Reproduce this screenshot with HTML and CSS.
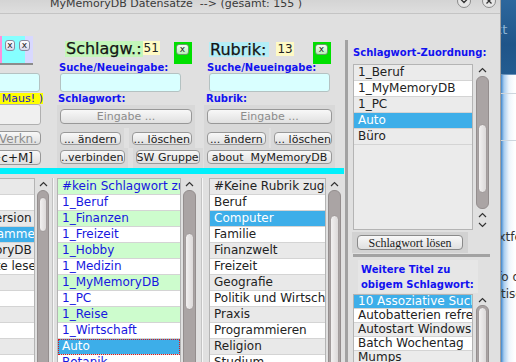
FILE: index.html
```html
<!DOCTYPE html>
<html>
<head>
<meta charset="utf-8">
<title>MyMemoryDB Datensätze</title>
<link rel="stylesheet" href="styles.css">
</head>
<body>
<div class="screen">
<div class="window">
	<div class="titlebar">
		<span class="title">MyMemoryDB Datensätze  --&gt; (gesamt: 155 )</span>
		<span class="tbtns">
			<span class="tbtn"><svg width="8" height="8" viewBox="0 0 8 8"><polyline points="1,2.5 4,5.5 7,2.5" fill="none" stroke="#333" stroke-width="1.3"/></svg></span>
			<span class="tbtn"><svg width="8" height="8" viewBox="0 0 8 8"><path d="M1.5 1.5 L6.5 6.5 M6.5 1.5 L1.5 6.5" stroke="#333" stroke-width="1.3"/></svg></span>
		</span>
	</div>
	<div class="client">
		<div class="main_pane">
			<div class="edit_area">
				<!-- previous column, scrolled off to the left -->
				<div class="col_prev">
					<div class="prev_inner">
						<div class="tag_strip"><button class="xbtn">x</button><button class="xbtn wide">x</button></div>
						<input class="edit prev_edit" type="text">
						<div class="hint">(rechte Maus! )</div>
						<input class="edit plain" type="text">
						<button class="btn clip b_verkn" disabled>Neue Verkn.</button>
						<button class="btn clip b_key">Merken [Alt+c+M]</button>
					</div>
				</div>
				<!-- Schlagwort -->
				<div class="col col_sw">
					<div class="col_head">
						<span class="head_label sw_label">Schlagw.:</span><span class="count">51</span>
						<span class="close_box"><button class="xbtn green">x</button></span>
					</div>
					<div class="blue_label">Suche/Neueingabe:</div>
					<input class="edit" type="text">
					<div class="blue_label sub">Schlagwort:</div>
					<div class="cell_row r1"><span class="cell"><button class="btn" disabled>Eingabe ...</button></span></div>
					<div class="cell_row r2"><span class="cell"><button class="btn">... ändern</button></span><span class="cell"><button class="btn">... löschen</button></span></div>
					<div class="cell_row r3"><span class="cell"><button class="btn">..verbinden</button></span><span class="cell"><button class="btn">SW Gruppe</button></span></div>
				</div>
				<!-- Rubrik -->
				<div class="col col_rub">
					<div class="col_head">
						<span class="head_label rub_label">Rubrik:</span><span class="count">13</span>
						<span class="close_box"><button class="xbtn green">x</button></span>
					</div>
					<div class="blue_label">Suche/Neueingabe:</div>
					<input class="edit" type="text">
					<div class="blue_label sub">Rubrik:</div>
					<div class="cell_row r1"><span class="cell"><button class="btn" disabled>Eingabe ...</button></span></div>
					<div class="cell_row r2"><span class="cell"><button class="btn">... ändern</button></span><span class="cell"><button class="btn">... löschen</button></span></div>
					<div class="cell_row r3"><span class="cell"><button class="btn">about&nbsp; MyMemoryDB</button></span></div>
				</div>
			</div>
			<div class="cyan_bar"></div>
			<div class="list_area">
				<div class="list list_prev">
					<div class="row">Info</div>
					<div class="row">Hilfe</div>
					<div class="row">Demo-Version</div>
					<div class="row sel">Wissensammeln</div>
					<div class="row">MyMemoryDB</div>
					<div class="row">Notizseite lesen</div>
					<div class="row">Notiz</div>
					<div class="row">Links</div>
					<div class="row">Suche</div>
					<div class="row">Tipps</div>
					<div class="row">Ideen</div>
					<div class="row">Fotos</div>
				</div>
				<div class="sbar s_prev">
					<div class="sarrow"><svg width="9" height="6" viewBox="0 0 9 6"><polyline points="1,5 4.5,1.5 8,5" fill="none" stroke="#333" stroke-width="1.2"/></svg></div>
					<div class="strack"><div class="sthumb"></div></div>
				</div>
				<div class="splitter"></div>
				<div class="list list_sw">
					<div class="row">#kein Schlagwort zugeordnet</div>
					<div class="row">1_Beruf</div>
					<div class="row">1_Finanzen</div>
					<div class="row">1_Freizeit</div>
					<div class="row">1_Hobby</div>
					<div class="row">1_Medizin</div>
					<div class="row">1_MyMemoryDB</div>
					<div class="row">1_PC</div>
					<div class="row">1_Reise</div>
					<div class="row">1_Wirtschaft</div>
					<div class="row sel focus">Auto</div>
					<div class="row">Botanik</div>
				</div>
				<div class="sbar s_sw">
					<div class="sarrow"><svg width="9" height="6" viewBox="0 0 9 6"><polyline points="1,5 4.5,1.5 8,5" fill="none" stroke="#333" stroke-width="1.2"/></svg></div>
					<div class="strack"><div class="sthumb"></div></div>
				</div>
				<div class="splitter wide"></div>
				<div class="list list_rub">
					<div class="row">#Keine Rubrik zugeordnet</div>
					<div class="row">Beruf</div>
					<div class="row sel">Computer</div>
					<div class="row">Familie</div>
					<div class="row">Finanzwelt</div>
					<div class="row">Freizeit</div>
					<div class="row">Geografie</div>
					<div class="row">Politik und Wirtschaft</div>
					<div class="row">Praxis</div>
					<div class="row">Programmieren</div>
					<div class="row">Religion</div>
					<div class="row">Studium</div>
				</div>
				<div class="sbar s_rub">
					<div class="sarrow"><svg width="9" height="6" viewBox="0 0 9 6"><polyline points="1,5 4.5,1.5 8,5" fill="none" stroke="#333" stroke-width="1.2"/></svg></div>
					<div class="strack"><div class="sthumb"></div></div>
				</div>
			</div>
		</div>
		<div class="split_bar"></div>
		<div class="side_pane">
			<div class="blue_label">Schlagwort-Zuordnung:</div>
			<div class="list_block top_block">
				<div class="list list_zu">
					<div class="row">1_Beruf</div>
					<div class="row">1_MyMemoryDB</div>
					<div class="row">1_PC</div>
					<div class="row sel">Auto</div>
					<div class="row">Büro</div>
				</div>
				<div class="sbar s_zu">
					<div class="sarrow"><svg width="9" height="6" viewBox="0 0 9 6"><polyline points="1,5 4.5,1.5 8,5" fill="none" stroke="#333" stroke-width="1.2"/></svg></div>
					<div class="strack"><div class="sthumb"></div></div>
					<div class="sarrows">
						<svg width="9" height="6" viewBox="0 0 9 6"><polyline points="1,5 4.5,1.5 8,5" fill="none" stroke="#333" stroke-width="1.2"/></svg>
						<svg width="9" height="6" viewBox="0 0 9 6"><polyline points="1,1 4.5,4.5 8,1" fill="none" stroke="#333" stroke-width="1.2"/></svg>
					</div>
				</div>
			</div>
			<div class="cell_row lose"><span class="cell"><button class="btn serif">Schlagwort lösen</button></span></div>
			<div class="hline"></div>
			<div class="titel_label blue_label">Weitere Titel zu<br>obigem Schlagwort:</div>
			<div class="list_block">
				<div class="list list_titel">
					<div class="row sel">10 Assoziative Suche</div>
					<div class="row">Autobatterien refresh</div>
					<div class="row">Autostart Windows</div>
					<div class="row">Batch Wochentag</div>
					<div class="row">Mumps</div>
				</div>
				<div class="sbar s_titel">
					<div class="sarrow"><svg width="9" height="6" viewBox="0 0 9 6"><polyline points="1,5 4.5,1.5 8,5" fill="none" stroke="#333" stroke-width="1.2"/></svg></div>
					<div class="strack"><div class="sthumb"></div></div>
				</div>
			</div>
		</div>
	</div>
</div>
<div class="desktop">
	<div class="dk_top"><span>Text</span></div>
	<div class="dk_win">
		<div class="dk_rule"></div>
		<div class="dk_rule second"></div>
		<div class="dk_text t1">Textfeld</div>
		<div class="dk_text t2">Info dient</div>
		<div class="dk_text t3">Optisch</div>
	</div>
</div>
</div>
</body>
</html>
```

FILE: styles.css
```css
body
{
	margin : 0;
	font-family : "DejaVu Sans", sans-serif;
	font-size : 12px;
	color : #222222;
	background-color : #e0e0e0;
}
.screen
{
	display : flex;
	width : 516px;
	height : 362px;
	overflow : hidden;
}
.window
{
	display : flex;
	flex-direction : column;
	width : 500px;
	flex : none;
	border-right : 1px solid #a0a0a0;
	background-color : #e0e0e0;
}

/* title bar, top edge is off screen */
.titlebar
{
	display : flex;
	height : 13px;
	border-bottom : 1px solid #c4c4c4;
	background : linear-gradient(#d4d4d4, #dedede);
	overflow : hidden;
}
.title
{
	margin-left : 50px;
	margin-top : -2px;
	font-size : 11px;
	line-height : 11px;
	color : #3a3a3a;
	white-space : pre;
}
.tbtns
{
	display : flex;
	gap : 11px;
	margin-left : auto;
	margin-right : 4px;
}
.tbtn
{
	display : flex;
	align-items : center;
	justify-content : center;
	width : 12px;
	height : 12px;
	margin-top : -6px;
	border : 1px solid #8a8a8a;
	border-radius : 50%;
	background-color : #e6e6e6;
}

.client
{
	display : flex;
	flex : 1;
	min-height : 0;
}
.main_pane
{
	display : flex;
	flex-direction : column;
	width : 345px;
	flex : none;
}
.split_bar
{
	width : 3px;
	flex : none;
	margin-top : 26px;
	background-color : #a2a2a2;
}
.side_pane
{
	display : flex;
	flex-direction : column;
	width : 147px;
	flex : none;
	padding : 33px 0 0 5px;
}

/* upper edit area */
.edit_area
{
	display : flex;
	align-items : flex-start;
	height : 154px;
	padding-top : 22px;
	box-sizing : border-box;
}
.col_prev
{
	width : 43px;
	flex : none;
	overflow : hidden;
}
.prev_inner
{
	display : flex;
	flex-direction : column;
	align-items : flex-start;
	width : 143px;
	margin-left : -100px;
}
.tag_strip
{
	display : flex;
	justify-content : flex-end;
	gap : 4px;
	width : 133px;
	height : 29px;
	padding : 4px 3px 0 0;
	box-sizing : border-box;
	border-bottom : 2px solid #8c8c8c;
	background : linear-gradient(to right, #ff90dc 0 102px, #86ffff 102px 125px, #d8d8ff 125px);
}
.xbtn
{
	display : flex;
	align-items : center;
	justify-content : center;
	width : 10px;
	height : 11px;
	padding : 0 0 2px 0;
	border : 1px solid #8c8ca0;
	border-radius : 3px;
	background : linear-gradient(#ffffff, #d8d8ea);
	font-family : "DejaVu Sans", sans-serif;
	font-size : 9px;
	color : #222222;
}
.xbtn.wide
{
	width : 11px;
}
.xbtn.green
{
	width : 13px;
	border-color : #6a9a6a;
	background : linear-gradient(#f6fff6, #b6eeb6);
}
.edit
{
	display : block;
	height : 19px;
	margin : 0;
	box-sizing : border-box;
	border : 1px solid #b4c2c2;
	border-radius : 3px;
	background-color : #d9ffff;
}
.prev_edit
{
	width : 140px;
	margin-top : 8px;
}
.hint
{
	width : 143px;
	height : 11px;
	margin-top : 1px;
	background-color : #ffff00;
	color : #1a1ac8;
	font-size : 11px;
	line-height : 11px;
	text-align : right;
	white-space : nowrap;
}
.edit.plain
{
	width : 141px;
	height : 21px;
	border-color : #b0b0b0;
	background-color : #f0f0f0;
}
.btn
{
	display : block;
	width : 100%;
	height : 100%;
	margin : 0;
	padding : 0;
	box-sizing : border-box;
	border : 1px solid #989898;
	border-radius : 4px;
	background : linear-gradient(#f8f8f8, #e0e0e0);
	font-family : "DejaVu Sans", sans-serif;
	font-size : 11px;
	color : #1c1c1c;
	white-space : nowrap;
	overflow : hidden;
}
.btn:disabled
{
	color : #8c8c8c;
}
.btn.clip
{
	width : 141px;
	font-size : 12px;
	text-align : right;
	padding-right : 3px;
}
.b_verkn
{
	height : 14px;
	margin-top : 6px;
}
.b_key
{
	height : 15px;
	margin-top : 5px;
	padding-right : 7px !important;
}
.btn.serif
{
	font-family : "Liberation Serif", serif;
	font-size : 12px;
	border-color : #8a8a8a;
}

.col
{
	display : flex;
	flex-direction : column;
	align-items : flex-start;
	flex : none;
	margin-top : 5px;
}
.col_sw
{
	width : 138px;
	margin-left : 14px;
}
.col_rub
{
	width : 131px;
	margin-left : 9px;
}
.col_head
{
	display : flex;
	align-items : flex-start;
	align-self : stretch;
	height : 21px;
}
.head_label
{
	height : 16px;
	padding : 0 1px;
	font-size : 16px;
	line-height : 16px;
	color : #141414;
	-webkit-text-stroke : 0.25px #141414;
}
.sw_label
{
	margin-left : 8px;
	background-color : #c3f6ba;
}
.rub_label
{
	height : 15px;
	margin-left : 5px;
	margin-top : 1px;
	padding-right : 3px;
	background-color : #b4eef7;
}
.count
{
	height : 14px;
	padding : 0 1px;
	font-size : 12px;
	line-height : 14px;
	background-color : #fffac4;
}
.col_rub .count
{
	margin-left : 7px;
	margin-top : 1px;
}
.close_box
{
	display : block;
	width : 18px;
	height : 22px;
	margin : 1px 3px 0 auto;
	padding : 2px 0 0 2px;
	box-sizing : border-box;
	background-color : #00e000;
}
.col_rub .close_box
{
	margin-right : 4px;
}
.blue_label
{
	height : 11px;
	font-size : 10px;
	font-weight : bold;
	line-height : 11px;
	color : #1212f0;
	white-space : nowrap;
}
.col_sw .blue_label { margin-left : 2px; }
.col_sw .edit { margin-left : 3px; width : 121px; }
.col_sw .blue_label.sub { margin-left : 1px; margin-top : 1px; }
.col_rub .blue_label { margin-left : 3px; }
.col_rub .edit { margin-left : 5px; width : 121px; }
.col_rub .blue_label.sub { margin-left : 2px; margin-top : 1px; }

.cell_row
{
	display : flex;
	gap : 5px;
	align-self : stretch;
}
.col_rub .cell_row
{
	gap : 2px;
}
.cell
{
	flex : 1;
	background-color : #d8d8d8;
}
.r1
{
	height : 23px;
	margin-top : 1px;
}
.r1 .cell { padding : 4px 3px; }
.r2 { height : 20px; }
.r2 .cell { padding : 4px 3px 3px; }
.r3 { height : 20px; }
.r3 .cell { padding : 2px 3px 4px; }

.cyan_bar
{
	width : 344px;
	height : 6px;
	background-color : #00f0fc;
}

/* lists */
.list_area
{
	display : flex;
	align-items : flex-start;
	flex : 1;
	min-height : 0;
	padding-top : 4px;
	overflow : hidden;
}
.list
{
	height : 200px;
	flex : none;
	box-sizing : border-box;
	border : 1px solid #b4b4b4;
	background-color : #ffffff;
	overflow : hidden;
}
.row
{
	height : 16px;
	box-sizing : border-box;
	padding-left : 4px;
	border-bottom : 1px solid #d4d4d4;
	line-height : 15px;
	white-space : nowrap;
	overflow : hidden;
}
.row.sel
{
	background-color : #3daee9;
	color : #ffffff;
}
.row.focus
{
	outline : 1px dotted #e01818;
	outline-offset : -1px;
}
.list_prev
{
	width : 35px;
	border-left : none;
}
.list_prev .row
{
	text-indent : -56px;
}
.list_prev .row:nth-child(odd),
.list_rub .row:nth-child(odd)
{
	background-color : #e9e9e9;
}
.list_sw
{
	width : 124px;
	color : #1717e0;
}
.list_sw .row:nth-child(odd)
{
	background-color : #cdfccd;
}
.list_rub
{
	width : 117px;
}
.list_prev .row.sel,
.list_sw .row.sel,
.list_rub .row.sel
{
	background-color : #3daee9;
	color : #ffffff;
}
.splitter
{
	width : 6px;
	height : 200px;
	flex : none;
	background : linear-gradient(to right, transparent 1px, #c2c2c2 1px 2px, #f6f6f6 2px 3px, transparent 3px);
}
.splitter.wide
{
	width : 11px;
	background : linear-gradient(to right, transparent 3px, #c4c4c4 3px 4px, #f6f6f6 4px 5px, transparent 5px);
}

/* scroll bars */
.sbar
{
	display : flex;
	flex-direction : column;
	align-items : center;
	flex : none;
	height : 200px;
}
.s_prev { width : 16px; }
.s_sw, .s_rub { width : 17px; }
.sarrow
{
	display : flex;
	align-items : center;
	justify-content : center;
	height : 12px;
	flex : none;
}
.strack
{
	width : 13px;
	flex : 1;
	padding : 1px;
	box-sizing : border-box;
	border : 1px solid #948e8e;
	border-radius : 6px;
	background-color : #aaa4a4;
}
.s_prev .strack { width : 12px; }
.sthumb
{
	box-sizing : border-box;
	border : 1px solid #a29c9c;
	border-radius : 5px;
	background : linear-gradient(to right, #f2f0f0, #dcd9d9);
}
.s_prev .sthumb { margin-top : 5px; height : 35px; }
.s_sw .sthumb { margin-top : 41px; height : 77px; }
.s_rub .sthumb { margin-top : 23px; height : 160px; }

/* side pane */
.list_block
{
	display : flex;
	gap : 2px;
	flex : none;
}
.top_block
{
	height : 166px;
	margin-top : 6px;
}
.list_zu,
.list_titel
{
	width : 120px;
	background-color : #ebebeb;
}
.list_zu
{
	height : 166px;
}
.list_zu .row:nth-child(even),
.list_titel .row:nth-child(even)
{
	background-color : #ffffff;
}
.list_zu .row.sel,
.list_titel .row.sel
{
	background-color : #3daee9;
	color : #ffffff;
}
.s_zu, .s_titel { width : 14px; }
.s_zu { height : 166px; }
.s_zu .sarrow { height : 11px; }
.s_zu .strack
{
	flex : none;
	height : 133px;
	margin-top : 1px;
}
.s_zu .sthumb { margin-top : 46px; height : 69px; }
.sarrows
{
	display : flex;
	flex-direction : column;
	align-items : center;
	gap : 4px;
	margin-top : 3px;
}
.s_titel .sarrow { height : 11px; }
.s_titel .sthumb { margin-top : 0; height : 120px; }
.cell_row.lose
{
	width : 116px;
	height : 21px;
	margin : 2px 0 0 -1px;
	flex : none;
}
.lose .cell
{
	padding : 3px 5px;
	background-color : #d2d2d2;
}
.hline
{
	width : 137px;
	height : 3px;
	margin-top : 1px;
	flex : none;
	background-color : #a2a2a2;
}
.titel_label
{
	height : auto;
	width : 114px;
	margin : 3px 0 0 5px;
	padding : 2px 3px 1px;
	line-height : 15px;
	background-color : #e6e6e6;
	flex : none;
}
.list_titel
{
	height : 80px;
	margin-top : 1px;
}
.list_titel .row
{
	height : 14px;
	line-height : 13px;
}
.list_titel + .s_titel
{
	height : 80px;
	margin-top : 1px;
}

/* other window behind, on the right */
.desktop
{
	display : flex;
	flex-direction : column;
	width : 15px;
	flex : none;
	overflow : hidden;
}
.dk_top
{
	height : 74px;
	flex : none;
	background : linear-gradient(#2d679d, #1f5589 60%, #245c90);
	color : #8fb6d6;
	font-size : 13px;
	white-space : nowrap;
}
.dk_top span
{
	display : block;
	margin : 22px 0 0 -20px;
}
.dk_win
{
	flex : 1;
	border-top : 1px solid #6a93bb;
	background : linear-gradient(to right, #3f86cc 0, #a9cdef 3px, #eef5fc 8px, #ffffff 14px);
}
.dk_rule
{
	height : 1px;
	margin-top : 18px;
	background-color : #cdd6de;
}
.dk_rule.second
{
	margin-top : 46px;
}
.dk_text
{
	margin-left : -15px;
	font-size : 12px;
	line-height : 15px;
	color : #333333;
	white-space : nowrap;
}
.dk_text.t1 { margin-top : 89px; }
.dk_text.t2 { margin-top : 25px; }
.dk_text.t3 { margin-top : 2px; margin-left : -17px; }
```
